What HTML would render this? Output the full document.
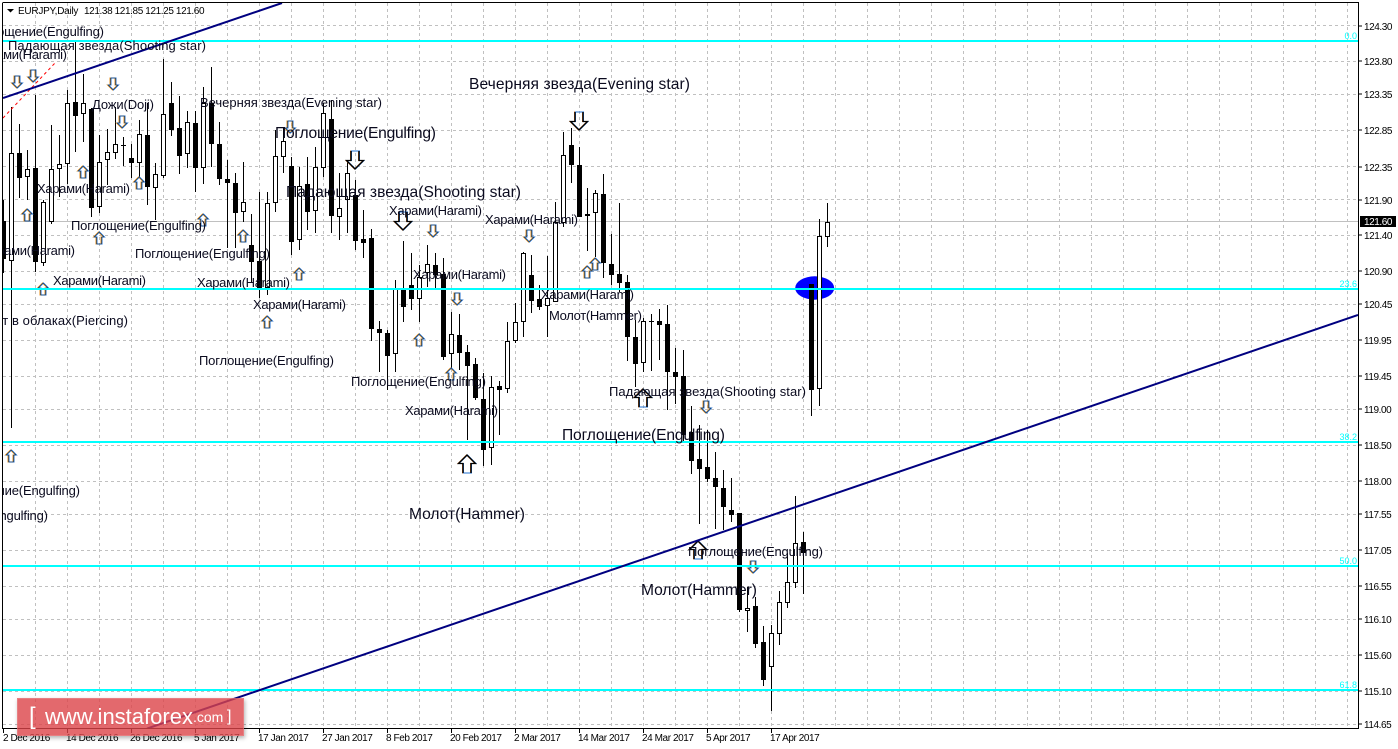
<!DOCTYPE html>
<html><head><meta charset="utf-8"><title>EURJPY,Daily</title>
<style>
html,body{margin:0;padding:0;background:#fff;width:1398px;height:749px;overflow:hidden}
svg{position:absolute;left:0;top:0;display:block}
text{font-family:"Liberation Sans","Noto Sans CJK SC",sans-serif;fill:#0a0a1e}
.s{font-size:13px}
.b{font-size:15.6px}
.ax{font-size:10px;letter-spacing:-.42px;fill:#000}
.c{font-size:9px;fill:#00ffff}
#wm{position:absolute;left:17px;top:698px;width:227px;height:38px;background:rgba(220,68,72,.8);box-shadow:1px 2px 4px rgba(0,0,0,.3);color:#fff;font-family:"Liberation Sans",sans-serif;white-space:nowrap;outline:1px solid rgba(255,255,255,.15);outline-offset:-1px}
#wm span{position:absolute}
</style></head><body>
<svg width="1398" height="749" viewBox="0 0 1398 749">
<defs>
<clipPath id="cl"><rect x="3" y="3" width="1355" height="725"/></clipPath>
<g id="u"><path d="M0-6 5-1H2.5V6H-2.5V-1H-5Z" fill="none" stroke="#e8901c" stroke-width="1" transform="translate(-.5 0)"/><path d="M0-6 5-1H2.5V6H-2.5V-1H-5Z" fill="none" stroke="#2070d0" stroke-width="1" transform="translate(.5 0)"/><path d="M0-6 5-1H2.5V6H-2.5V-1H-5Z" fill="none" stroke="#111" stroke-width=".35"/></g>
<g id="U"><path d="M0-9 8.5-.5H4V9H-4V-.5H-8.5Z" fill="none" stroke="#d07020" stroke-width="1" transform="translate(-.5 0)"/><path d="M0-9 8.5-.5H4V9H-4V-.5H-8.5Z" fill="none" stroke="#2070d0" stroke-width="1" transform="translate(.5 0)"/><path d="M-4 9V-.5H-8.5L0-9 8.5-.5H4V9" fill="none" stroke="#000" stroke-width="1.3"/></g>
</defs>

<!-- grid -->
<g stroke="#c0c0c0" stroke-width="1" stroke-dasharray="3 3" fill="none" shape-rendering="crispEdges">
<path d="M3 25.5H1358M3 61.5H1358M3 94.5H1358M3 130.5H1358M3 166.5H1358M3 199.5H1358M3 235.5H1358M3 271.5H1358M3 304.5H1358M3 340.5H1358M3 376.5H1358M3 409.5H1358M3 445.5H1358M3 481.5H1358M3 514.5H1358M3 550.5H1358M3 586.5H1358M3 619.5H1358M3 655.5H1358M3 691.5H1358M3 724.5H1358"/>
<path d="M35.5 3V728M67.5 3V728M99.5 3V728M131.5 3V728M163.5 3V728M195.5 3V728M227.5 3V728M259.5 3V728M291.5 3V728M323.5 3V728M355.5 3V728M387.5 3V728M419.5 3V728M451.5 3V728M483.5 3V728M515.5 3V728M547.5 3V728M579.5 3V728M611.5 3V728M643.5 3V728M675.5 3V728M707.5 3V728M739.5 3V728M771.5 3V728M803.5 3V728M835.5 3V728M867.5 3V728M899.5 3V728M931.5 3V728M963.5 3V728M995.5 3V728M1027.5 3V728M1059.5 3V728M1091.5 3V728M1123.5 3V728M1155.5 3V728M1187.5 3V728M1219.5 3V728M1251.5 3V728M1283.5 3V728M1315.5 3V728M1347.5 3V728"/>
</g>
<path d="M3 221.5H1358" stroke="#c0c0c0" shape-rendering="crispEdges"/>

<ellipse cx="814.7" cy="288" rx="19.5" ry="11.7" fill="#0000ff"/>

<g clip-path="url(#cl)" shape-rendering="crispEdges">
<!-- wicks -->
<path fill="none" stroke="#000" stroke-width="1" d="M3.5 200V273M11.5 107V428M19.5 124V198M27.5 150V200M35.5 95V272M43.5 200V266M51.5 125V224M59.5 135V197M67.5 90V184M75.5 40V152M83.5 74V142M91.5 108V217M99.5 135V213M107.5 129V185M115.5 107V159M123.5 137V166M131.5 144V178M139.5 120V177M147.5 103V205M155.5 163V220M163.5 59V178M171.5 82V136M179.5 96V174M187.5 111V168M195.5 111V192M203.5 87V184M211.5 67V167M219.5 122V185M227.5 160V248M235.5 173V248M243.5 162V222M251.5 214V282M259.5 192V298M267.5 192V295M275.5 130V212M283.5 128V173M291.5 157V255M299.5 167V250M307.5 157V230M315.5 147V233M323.5 103V177M331.5 100V233M339.5 173V240M347.5 160V233M355.5 180V250M363.5 210V258M371.5 229V341M379.5 321V372M387.5 330V390M395.5 280V372M403.5 241V322M411.5 253V310M419.5 265V322M427.5 245V287M435.5 253V288M443.5 258V360M451.5 312V368M459.5 314V370M467.5 345V440M475.5 358V400M483.5 373V466M491.5 376V465M499.5 381V435M507.5 322V393M515.5 303V343M523.5 252V337M531.5 255V313M539.5 285V310M547.5 256V337M555.5 202V302M563.5 132V227M571.5 128V183M579.5 147V217M587.5 188V251M595.5 190V257M603.5 174V278M611.5 234V285M619.5 203V292M627.5 275V361M635.5 320V387M643.5 318V372M651.5 314V371M659.5 309V360M667.5 305V410M675.5 348V404M683.5 350V442M691.5 406V474M699.5 425V524M707.5 430V482M715.5 452V529M723.5 470V530M731.5 478V522M739.5 513V612M747.5 587V632M755.5 597V648M763.5 626V686M771.5 625V711M779.5 591V645M787.5 553V608M795.5 496V588M803.5 532V594M811.5 284V416M819.5 219V406M827.5 203V247"/>
<!-- white bodies -->
<path fill="#fff" stroke="#000" stroke-width="1" d="M9.5 153.5h4V260.5h-4zM25.5 169.5h4V176.5h-4zM41.5 202.5h4V262.5h-4zM49.5 169.5h4V221.5h-4zM57.5 164.5h4V168.5h-4zM65.5 103.5h4V163.5h-4zM81.5 103.5h4V113.5h-4zM97.5 162.5h4V206.5h-4zM105.5 152.5h4V159.5h-4zM113.5 144.5h4V152.5h-4zM137.5 134.5h4V162.5h-4zM153.5 174.5h4V187.5h-4zM161.5 114.5h4V175.5h-4zM185.5 122.5h4V153.5h-4zM201.5 103.5h4V167.5h-4zM241.5 202.5h4V211.5h-4zM265.5 203.5h4V287.5h-4zM273.5 156.5h4V202.5h-4zM281.5 141.5h4V156.5h-4zM297.5 186.5h4V239.5h-4zM313.5 167.5h4V210.5h-4zM321.5 113.5h4V167.5h-4zM337.5 208.5h4V216.5h-4zM345.5 173.5h4V199.5h-4zM393.5 288.5h4V353.5h-4zM417.5 277.5h4V298.5h-4zM425.5 264.5h4V272.5h-4zM449.5 334.5h4V353.5h-4zM489.5 387.5h4V447.5h-4zM505.5 341.5h4V388.5h-4zM513.5 322.5h4V340.5h-4zM521.5 253.5h4V321.5h-4zM545.5 298.5h4V305.5h-4zM553.5 222.5h4V301.5h-4zM561.5 155.5h4V222.5h-4zM593.5 193.5h4V212.5h-4zM641.5 321.5h4V362.5h-4zM745.5 608.5h4V610.5h-4zM769.5 633.5h4V666.5h-4zM777.5 602.5h4V633.5h-4zM785.5 582.5h4V602.5h-4zM793.5 543.5h4V582.5h-4zM817.5 236.5h4V388.5h-4zM825.5 222.5h4V236.5h-4z"/>
<!-- black bodies -->
<path fill="#000" d="M1 221h5V259h-5zM17 153h5V178h-5zM33 168h5V262h-5zM73 102h5V116h-5zM89 109h5V208h-5zM121 145h5V146h-5zM129 158h5V163h-5zM145 135h5V187h-5zM169 103h5V130h-5zM177 128h5V156h-5zM193 123h5V168h-5zM209 103h5V144h-5zM217 144h5V179h-5zM225 179h5V183h-5zM233 183h5V213h-5zM249 245h5V262h-5zM257 261h5V288h-5zM289 166h5V242h-5zM305 184h5V212h-5zM329 119h5V216h-5zM353 195h5V241h-5zM361 239h5V243h-5zM369 238h5V329h-5zM377 329h5V333h-5zM385 333h5V356h-5zM401 289h5V307h-5zM409 285h5V299h-5zM433 265h5V275h-5zM441 274h5V357h-5zM457 335h5V353h-5zM465 352h5V366h-5zM473 364h5V398h-5zM481 399h5V450h-5zM497 386h5V390h-5zM529 275h5V301h-5zM537 299h5V307h-5zM569 145h5V165h-5zM577 165h5V217h-5zM585 214h5V216h-5zM601 194h5V263h-5zM609 264h5V275h-5zM617 274h5V283h-5zM625 282h5V337h-5zM633 337h5V364h-5zM649 321h5V322h-5zM657 321h5V325h-5zM665 324h5V372h-5zM673 372h5V377h-5zM681 376h5V435h-5zM689 432h5V461h-5zM697 459h5V469h-5zM705 467h5V479h-5zM713 478h5V487h-5zM721 488h5V507h-5zM729 510h5V515h-5zM737 513h5V610h-5zM753 606h5V644h-5zM761 642h5V680h-5zM801 542h5V553h-5zM809 284h5V390h-5z"/>
</g>

<!-- red dashed -->
<path d="M3 118 55 63" stroke="#ff0000" stroke-width="1" stroke-dasharray="3 3" fill="none"/>

<!-- arrows -->
<g>
<use href="#u" x="27" y="215"/><use href="#u" x="83" y="172"/><use href="#u" x="139" y="183"/><use href="#u" x="99" y="238"/><use href="#u" x="203" y="220"/><use href="#u" x="243" y="236"/><use href="#u" x="43" y="289"/><use href="#u" x="299" y="274"/><use href="#u" x="267" y="322"/><use href="#u" x="11" y="456"/><use href="#u" x="419" y="340"/><use href="#u" x="587" y="272"/><use href="#u" x="595" y="264"/><use href="#u" x="451" y="374"/>
<use href="#u" transform="translate(17 82) scale(1 -1)"/><use href="#u" transform="translate(33 76) scale(1 -1)"/><use href="#u" transform="translate(113 84) scale(1 -1)"/><use href="#u" transform="translate(122 122) scale(1 -1)"/><use href="#u" transform="translate(290 127) scale(1 -1)"/><use href="#u" transform="translate(433 231) scale(1 -1)"/><use href="#u" transform="translate(529 236) scale(1 -1)"/><use href="#u" transform="translate(457 299) scale(1 -1)"/><use href="#u" transform="translate(706 407) scale(1 -1)"/><use href="#u" transform="translate(753 567) scale(1 -1)"/>
<use href="#U" transform="translate(355 160) scale(1 -1)"/><use href="#U" transform="translate(579 121) scale(1 -1)"/><use href="#U" transform="translate(403 221) scale(1 -1)"/>
<use href="#U" x="467" y="464"/><use href="#U" x="643" y="398"/><use href="#U" x="698" y="550"/>
</g>

<!-- cyan levels -->
<g fill="#00ffff" shape-rendering="crispEdges">
<rect x="3" y="40" width="1355" height="2"/>
<rect x="3" y="288" width="1355" height="2"/>
<rect x="3" y="441" width="1355" height="2"/>
<rect x="3" y="565" width="1355" height="2"/>
<rect x="3" y="689" width="1355" height="2"/>
</g>
<g>
<text class="c" x="1357" y="39" text-anchor="end">0.0</text>
<text class="c" x="1357" y="287" text-anchor="end">23.6</text>
<text class="c" x="1357" y="440" text-anchor="end">38.2</text>
<text class="c" x="1357" y="564" text-anchor="end">50.0</text>
<text class="c" x="1357" y="688" text-anchor="end">61.8</text>
</g>

<!-- trend lines -->
<g clip-path="url(#cl)">
<path d="M3 98 282 3" stroke="#000080" stroke-width="2" fill="none"/>
<path d="M147 728.6 1358 315" stroke="#000080" stroke-width="2" fill="none"/>
</g>

<!-- pattern labels -->
<g clip-path="url(#cl)">
<text class="s" textLength="135" x="-31" y="36">Поглощение(Engulfing)</text>
<text class="s" textLength="198" x="8" y="50">Падающая звезда(Shooting star)</text>
<text class="s" textLength="93" x="-26" y="59">Харами(Harami)</text>
<text class="s" textLength="62" x="92" y="109">Дожи(Doji)</text>
<text class="s" textLength="182" x="200" y="107">Вечерняя звезда(Evening star)</text>
<text class="s" textLength="93" x="37" y="193">Харами(Harami)</text>
<text class="s" textLength="135" x="71" y="230">Поглощение(Engulfing)</text>
<text class="s" textLength="135" x="135" y="258">Поглощение(Engulfing)</text>
<text class="s" textLength="93" x="-18" y="255">Харами(Harami)</text>
<text class="s" textLength="93" x="53" y="285">Харами(Harami)</text>
<text class="s" textLength="93" x="197" y="287">Харами(Harami)</text>
<text class="s" textLength="93" x="253" y="309">Харами(Harami)</text>
<text class="s" textLength="135" x="199" y="365">Поглощение(Engulfing)</text>
<text class="s" textLength="170" x="-42" y="325">Просвет в облаках(Piercing)</text>
<text class="s" textLength="93" x="389" y="215">Харами(Harami)</text>
<text class="s" textLength="93" x="485" y="224">Харами(Harami)</text>
<text class="s" textLength="93" x="413" y="279">Харами(Harami)</text>
<text class="s" textLength="93" x="541" y="299">Харами(Harami)</text>
<text class="s" textLength="93" x="549" y="320">Молот(Hammer)</text>
<text class="s" textLength="135" x="351" y="386">Поглощение(Engulfing)</text>
<text class="s" textLength="93" x="405" y="415">Харами(Harami)</text>
<text class="s" textLength="197" x="609" y="396">Падающая звезда(Shooting star)</text>
<text class="s" textLength="135" x="688" y="556">Поглощение(Engulfing)</text>
<text class="s" textLength="135" x="-55" y="495">Поглощение(Engulfing)</text>
<text class="s" textLength="135" x="-87" y="520">Поглощение(Engulfing)</text>
<text class="b" textLength="221" x="469" y="89">Вечерняя звезда(Evening star)</text>
<text class="b" textLength="161" x="275" y="138">Поглощение(Engulfing)</text>
<text class="b" textLength="235" x="286" y="197">Падающая звезда(Shooting star)</text>
<text class="b" textLength="116" x="409" y="519">Молот(Hammer)</text>
<text class="b" textLength="163" x="562" y="440">Поглощение(Engulfing)</text>
<text class="b" textLength="116" x="641" y="595">Молот(Hammer)</text>
</g>

<!-- frame -->
<g stroke="#000" fill="none" shape-rendering="crispEdges">
<path d="M2.5 3V728.5H1358.5V2.5H2.5" stroke-width="1"/>
<path d="M1358.5 26H1362M1358.5 61H1362M1358.5 94H1362M1358.5 130H1362M1358.5 167H1362M1358.5 200H1362M1358.5 235H1362M1358.5 271H1362M1358.5 304H1362M1358.5 340H1362M1358.5 376H1362M1358.5 409H1362M1358.5 445H1362M1358.5 481H1362M1358.5 514H1362M1358.5 550H1362M1358.5 586H1362M1358.5 619H1362M1358.5 655H1362M1358.5 691H1362M1358.5 724H1362"/>
<path d="M3.5 729V733M67.5 729V733M131.5 729V733M195.5 729V733M259.5 729V733M323.5 729V733M387.5 729V733M451.5 729V733M515.5 729V733M579.5 729V733M643.5 729V733M707.5 729V733M771.5 729V733"/>
</g>

<!-- price axis -->
<g>
<text class="ax" x="1364" y="30">124.30</text>
<text class="ax" x="1364" y="65">123.80</text>
<text class="ax" x="1364" y="98">123.35</text>
<text class="ax" x="1364" y="134">122.85</text>
<text class="ax" x="1364" y="171">122.35</text>
<text class="ax" x="1364" y="204">121.90</text>
<text class="ax" x="1364" y="239">121.40</text>
<text class="ax" x="1364" y="275">120.90</text>
<text class="ax" x="1364" y="308">120.45</text>
<text class="ax" x="1364" y="344">119.95</text>
<text class="ax" x="1364" y="380">119.45</text>
<text class="ax" x="1364" y="413">119.00</text>
<text class="ax" x="1364" y="449">118.50</text>
<text class="ax" x="1364" y="485">118.00</text>
<text class="ax" x="1364" y="518">117.55</text>
<text class="ax" x="1364" y="554">117.05</text>
<text class="ax" x="1364" y="590">116.55</text>
<text class="ax" x="1364" y="623">116.10</text>
<text class="ax" x="1364" y="659">115.60</text>
<text class="ax" x="1364" y="695">115.10</text>
<text class="ax" x="1364" y="728">114.65</text>
</g>
<rect x="1360" y="216" width="36" height="11" fill="#000"/>
<text class="ax" x="1364" y="225" style="fill:#fff">121.60</text>

<!-- date axis -->
<g>
<text class="ax" x="3" y="741">2 Dec 2016</text>
<text class="ax" x="66" y="741">14 Dec 2016</text>
<text class="ax" x="130" y="741">26 Dec 2016</text>
<text class="ax" x="194" y="741">5 Jan 2017</text>
<text class="ax" x="258" y="741">17 Jan 2017</text>
<text class="ax" x="322" y="741">27 Jan 2017</text>
<text class="ax" x="386" y="741">8 Feb 2017</text>
<text class="ax" x="450" y="741">20 Feb 2017</text>
<text class="ax" x="514" y="741">2 Mar 2017</text>
<text class="ax" x="578" y="741">14 Mar 2017</text>
<text class="ax" x="642" y="741">24 Mar 2017</text>
<text class="ax" x="706" y="741">5 Apr 2017</text>
<text class="ax" x="770" y="741">17 Apr 2017</text>
</g>

<!-- header -->
<path d="M7 9h7l-3.5 3.5z" fill="#000"/>
<text class="ax" x="18" y="14" style="letter-spacing:-.25px">EURJPY,Daily</text>
<text class="ax" x="84" y="14" style="letter-spacing:-.39px">121.38 121.85 121.25 121.60</text>
</svg>
<div id="wm">
<span style="left:12px;top:5px;font-size:24px;font-weight:300">[</span>
<span style="left:28px;top:6px;font-size:22px">www.instaforex</span>
<span style="left:176px;top:11px;font-size:14px">.com</span>
<span style="left:210px;top:10px;font-size:16px">]</span>
</div>
</body></html>
